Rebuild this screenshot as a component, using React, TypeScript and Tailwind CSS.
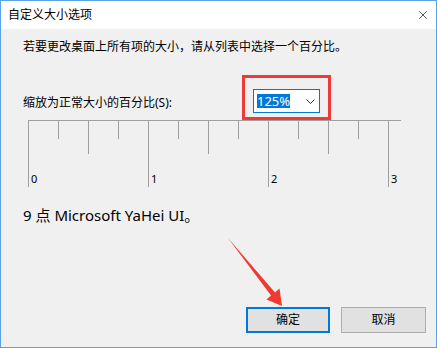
import { X } from "lucide-react";

const TICKS = [0, 1, 2, 3];

function Ruler() {
  const lines: { x: number; h: number }[] = [];
  for (let i = 0; i <= 12; i++) {
    const x = i * 30 + 0.5;
    const h = i % 4 === 0 ? 67 : i % 2 === 0 ? 34 : 19;
    lines.push({ x, h });
  }
  return (
    <svg width="380" height="68" className="ml-[27px] mt-[7px] block">
      <line x1="0" y1="0.5" x2="373" y2="0.5" stroke="#a0a0a0" />
      {lines.map((l) => (
        <line key={l.x} x1={l.x} y1="0" x2={l.x} y2={l.h} stroke="#a0a0a0" />
      ))}
      {TICKS.map((t) => (
        <text key={t} x={t * 120 + 3} y="63" fontSize="11" fill="#000">
          {t}
        </text>
      ))}
    </svg>
  );
}

export default function App() {
  return (
    <div className="relative w-[437px] h-[348px] border border-[#5aa2e6] flex flex-col font-['Noto_Sans','Noto_Sans_CJK_SC',sans-serif] text-black">
      {/* Title bar */}
      <div className="h-[28px] bg-white flex items-center justify-between pl-[7px] pr-[6px]">
        <span className="text-[12px]">自定义大小选项</span>
        <X className="w-[14px] h-[14px] text-[#111]" strokeWidth={1.2} />
      </div>

      {/* Body */}
      <div className="flex-1 bg-[#f0f0f0] flex flex-col">
        <p className="ml-[22px] mt-[10px] text-[12px] leading-[16px]">
          若要更改桌面上所有项的大小，请从列表中选择一个百分比。
        </p>

        <div className="flex items-center mt-[34px]">
          <span className="ml-[22px] w-[230px] pt-[4px] text-[12px] leading-[16px]">
            缩放为正常大小的百分比(S):
          </span>
          <div className="relative">
            <div className="w-[67px] h-[24px] bg-white border border-[#0078d7] flex items-center pl-[3px] pr-[4px]">
              <span className="bg-[#0078d7] text-white text-[13px] leading-[14px] h-[14px] w-[33px] flex items-center">
                125%
              </span>
              <svg width="9" height="5" className="ml-auto mr-[0px]" viewBox="0 0 9 5">
                <path d="M0.5 0.5 L4.5 4.5 L8.5 0.5" fill="none" stroke="#333" />
              </svg>
            </div>
            {/* annotation box */}
            <div className="absolute left-[-11px] top-[-14px] w-[89px] h-[45px] border-[3px] border-[#ef3a3a]" />
          </div>
        </div>

        <Ruler />

        <p className="ml-[22px] mt-[17px] text-[15px] leading-[20px]">9 点 Microsoft YaHei UI。</p>

        <div className="flex-1" />

        <div className="flex justify-end gap-[11px] pr-[10px] pb-[14px]">
          <button className="w-[84px] h-[26px] bg-[#e1e1e1] border-2 border-[#0078d7] text-[12px]">
            确定
          </button>
          <button className="w-[85px] h-[26px] bg-[#e1e1e1] border border-[#adadad] text-[12px]">
            取消
          </button>
        </div>
      </div>

      {/* arrow annotation */}
      <svg className="absolute left-0 top-0 pointer-events-none" width="437" height="348">
        <polygon
          points="227,237 274,291.5 278.5,287.5 281,305 265.5,298.5 270,294.5"
          fill="#ee3a32"
        />
      </svg>
    </div>
  );
}
